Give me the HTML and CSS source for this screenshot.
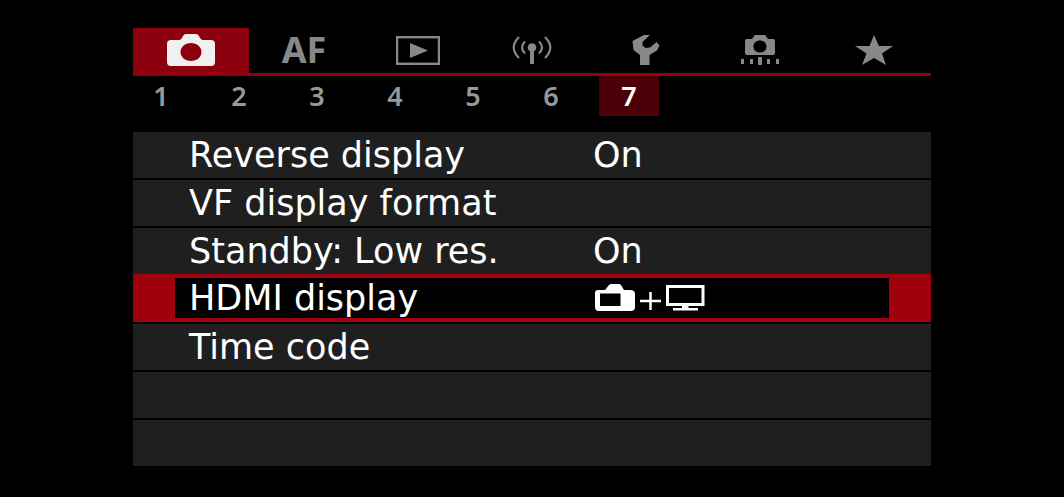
FILE: index.html
```html
<!DOCTYPE html>
<html lang="en">
<head>
<meta charset="utf-8">
<meta name="viewport" content="width=device-width, initial-scale=1">
<title>Camera menu</title>
<link rel="stylesheet" href="styles.css">
</head>
<body>
<main class="menu">
  <nav class="tabs" aria-label="Menu groups">
    <button class="tab tab-active" type="button" aria-label="Shooting">
      <svg width="48" height="32" viewBox="0 0 48 32"><path fill="#f0f0f0" fill-rule="evenodd" d="M4 6H12Q14 6 15 4L16 2Q17 0 19 0H29Q31 0 32 2L33 4Q34 6 36 6H44Q48 6 48 10V28Q48 32 44 32H4Q0 32 0 28V10Q0 6 4 6ZM24 9C18 9 13.500 13 13.500 18S18 27 24 27S34.500 23 34.500 18S30 9 24 9Z"/></svg>
    </button>
    <button class="tab" type="button">AF</button>
    <button class="tab" type="button" aria-label="Playback">
      <svg width="44" height="29" viewBox="0 0 44 29"><rect x="1" y="1.200" width="42" height="26.600" fill="none" stroke="#888" stroke-width="2.400"/><path fill="#888" d="M14 7L32 14.500L14 22Z"/></svg>
    </button>
    <button class="tab" type="button" aria-label="Wireless">
      <svg width="40" height="28" viewBox="0 0 40 28"><circle cx="20" cy="11.500" r="4.300" fill="#888"/><path fill="#888" d="M18 12H22V28H18Z"/><g fill="none" stroke="#888" stroke-width="2.200"><path d="M13 5.500Q7 11.500 13 17.500M27 5.500Q33 11.500 27 17.500M7 1Q-3.500 11.500 7 22M33 1Q43.500 11.500 33 22"/></g></svg>
    </button>
    <button class="tab" type="button" aria-label="Setup">
      <svg width="28" height="30" viewBox="0 0 28 30"><path fill="#888" d="M12 0H18L10.500 7V10.500L13.500 13L18 12.500L24.500 7L27.500 10.500L25 15.500L17.500 20V30H8V20L1.500 15L0.500 6Z"/></svg>
    </button>
    <button class="tab" type="button" aria-label="Custom functions">
      <svg width="40" height="30" viewBox="0 0 40 30"><path fill="#888" fill-rule="evenodd" d="M7 4H12L15 0H25L28 4H33Q35 4 35 6V18Q35 20 33 20H7Q5 20 5 18V6Q5 4 7 4ZM20 5.500C16 5.500 13.500 8 13.500 11.500S16 17.500 20 17.500S26.500 15 26.500 11.500S24 5.500 20 5.500Z"/><path fill="#888" d="M1 24H4V29H1ZM10 24H13V29H10ZM18 22H22V30H18ZM27 24H30V29H27ZM36 24H39V29H36Z"/></svg>
    </button>
    <button class="tab" type="button" aria-label="My menu">
      <svg width="38" height="30" viewBox="0 0 38 30"><path fill="#888" d="M19 0L24 11H38L27 18.500L31 30L19 23L7 30L11.500 18.500L0 11H14.500Z"/></svg>
    </button>
  </nav>
  <nav class="pages" aria-label="Pages">
    <button class="page" type="button">1</button>
    <button class="page" type="button">2</button>
    <button class="page" type="button">3</button>
    <button class="page" type="button">4</button>
    <button class="page" type="button">5</button>
    <button class="page" type="button">6</button>
    <button class="page page-active" type="button" aria-current="page">7</button>
  </nav>
  <ul class="list">
    <li class="row"><button class="item" type="button"><span class="name">Reverse display</span><span class="value">On</span></button></li>
    <li class="row"><button class="item" type="button"><span class="name">VF display format</span></button></li>
    <li class="row"><button class="item" type="button"><span class="name">Standby: Low res.</span><span class="value">On</span></button></li>
    <li class="row row-selected"><button class="item" type="button"><span class="name">HDMI display</span><span class="value">
      <svg class="output" width="112" height="28" viewBox="0 0 112 28" role="img" aria-label="Camera and monitor"><path fill="#fff" fill-rule="evenodd" d="M5 6H12L16 1Q17 0 18 0H26Q27 0 28 1L31 6H37Q42 6 42 10V23Q42 27 38 27H6Q2 27 2 23V9Q2 6 5 6ZM7 9.500V22H27.500V9.500Z"/><path stroke="#fff" stroke-width="2.500" d="M47 17H68M57.500 8V26"/><path fill="#fff" fill-rule="evenodd" d="M73 1H111.500V22H95.500V24H105V26.500H80V24H89V22H73ZM76 4V19H108.500V4Z"/></svg>
    </span></button></li>
    <li class="row"><button class="item" type="button"><span class="name">Time code</span></button></li>
    <li class="row"></li>
    <li class="row"></li>
  </ul>
</main>
</body>
</html>
```
FILE: styles.css
```css
* {
  box-sizing: border-box;
}

body {
  margin: 0;
  background: #000;
  color: #fff;
  font-family: "Noto Sans", "Open Sans", sans-serif;
}

button {
  border: 0;
  padding: 0;
  background: none;
  color: inherit;
  font: inherit;
}

svg {
  display: block;
}

.menu {
  width: 75%;
  margin: 0 auto;
  padding: 28px 0 32px;
}

.tabs {
  display: grid;
  grid-template-columns: repeat(7, 1fr);
  border-bottom: 3px solid #94000e;
}

.tab {
  display: flex;
  align-items: center;
  justify-content: center;
  height: 45px;
  padding-bottom: 1px;
  color: #888;
  font-size: 36px;
  font-weight: 700;
  line-height: 42px;
}

.tab-active {
  margin-right: -2px;
  background: #8d000d;
}

.pages {
  display: flex;
  gap: 22px;
  height: 40px;
}

.page {
  width: 56px;
  color: #999;
  font-size: 27px;
  font-weight: 600;
  line-height: 40px;
}

.page-active {
  width: 60px;
  margin: 0 -2px;
  background: #4d0007;
  color: #fff;
}

.list {
  display: grid;
  gap: 2px;
  margin: 16px 0 0;
  padding: 0;
  list-style: none;
}

.row {
  height: 46px;
  padding: 3px 42px;
  background: #1f1f1f;
}

.item {
  display: grid;
  grid-template-columns: 404px 1fr;
  align-items: center;
  width: 100%;
  height: 40px;
  padding-left: 14px;
  font-family: "DejaVu Sans", sans-serif;
  font-size: 35px;
  line-height: 40px;
  text-align: left;
}

.row-selected {
  height: 48px;
  margin-top: -2px;
  padding: 4px 42px;
  background: #a0000e;
}

.row-selected .item {
  background: #000;
}
```
